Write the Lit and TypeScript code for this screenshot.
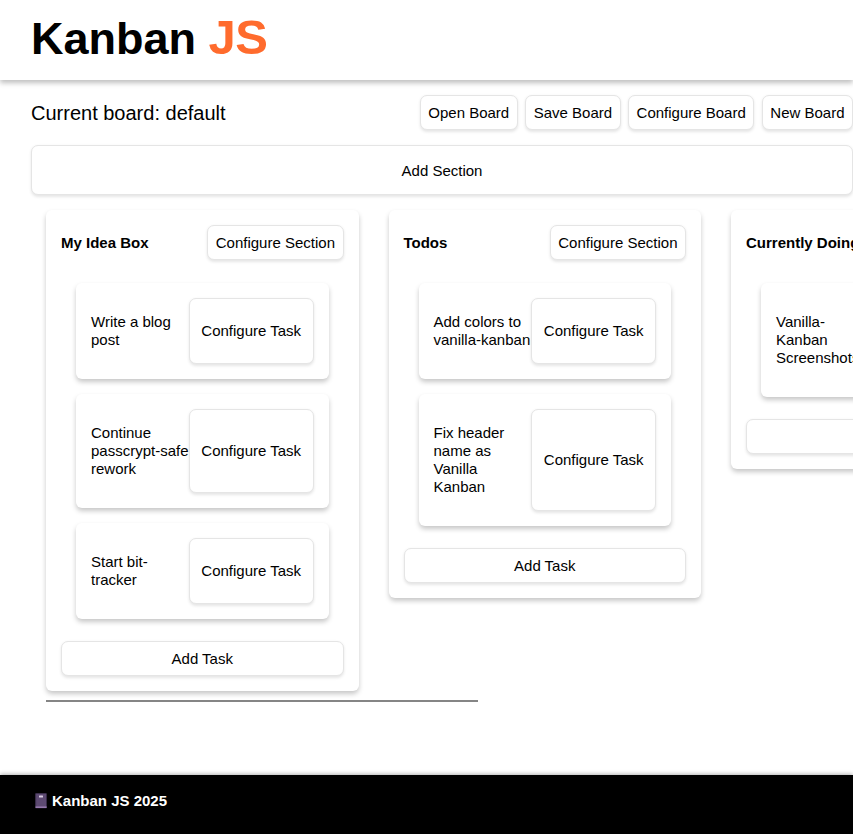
import { LitElement, html, css, svg } from "lit";
import { customElement, property } from "lit/decorators.js";

interface Section {
  name: string;
  tasks: string[];
}

const buttonStyles = css`
  .btn {
    box-sizing: border-box;
    margin: 0;
    height: 35px;
    padding: 0 7.5px;
    border: 1px solid #e5e5e5;
    border-radius: 7px;
    background: #fff;
    color: #000;
    font: 15px/18px "Liberation Sans", Arial, sans-serif;
    white-space: nowrap;
    box-shadow: 0 1.5px 3px rgba(0, 0, 0, 0.1);
  }
`;

const notebook = svg`<svg class="book" viewBox="0 0 13 16" width="13" height="16">
  <rect x="0.2" y="0.2" width="11.6" height="15" rx="0.6" fill="#46375a"/>
  <rect x="1.2" y="0.8" width="9.8" height="12.4" fill="#5d4a72"/>
  <rect x="0.6" y="13.4" width="11" height="1.5" fill="#9d80b5"/>
  <rect x="4" y="2.6" width="4" height="2" rx="0.5" fill="#d9cce2"/>
</svg>`;

@customElement("task-card")
export class TaskCard extends LitElement {
  @property() label = "";

  static styles = [
    buttonStyles,
    css`
      :host {
        display: flex;
        padding: 15px;
        border-radius: 6px;
        background: #fff;
        box-shadow: 0 3px 5px rgba(0, 0, 0, 0.22);
      }
      .label {
        flex: 1 1 0;
        min-width: 0;
        margin: 15px 0;
        line-height: 18px;
      }
      .configure {
        flex: none;
        width: 124.6px;
        height: auto;
      }
    `,
  ];

  render() {
    return html`<p class="label">${this.label}</p>
      <button class="btn configure">Configure Task</button>`;
  }
}

@customElement("board-section")
export class BoardSection extends LitElement {
  @property({ attribute: false }) section: Section = { name: "", tasks: [] };

  static styles = [
    buttonStyles,
    css`
      :host {
        box-sizing: border-box;
        display: flex;
        flex: none;
        flex-direction: column;
        width: 312.5px;
        padding: 15px;
        border-radius: 6px;
        background: #fff;
        box-shadow: 0 3px 5px rgba(0, 0, 0, 0.22);
      }
      .head {
        display: flex;
        align-items: center;
        justify-content: space-between;
      }
      .name {
        margin: 0;
        font-size: 15px;
        line-height: 18px;
        white-space: nowrap;
      }
      .tasks {
        display: flex;
        flex-direction: column;
        gap: 15px;
        margin: 23px 15px 22px;
      }
    `,
  ];

  render() {
    return html`<div class="head">
        <h2 class="name">${this.section.name}</h2>
        <button class="btn">Configure Section</button>
      </div>
      <div class="tasks">
        ${this.section.tasks.map((t) => html`<task-card .label=${t}></task-card>`)}
      </div>
      <button class="btn">Add Task</button>`;
  }
}

@customElement("app-root")
export class AppRoot extends LitElement {
  private sections: Section[] = [
    {
      name: "My Idea Box",
      tasks: ["Write a blog post", "Continue passcrypt-safe rework", "Start bit-tracker"],
    },
    {
      name: "Todos",
      tasks: ["Add colors to vanilla-kanban", "Fix header name as Vanilla Kanban"],
    },
    { name: "Currently Doing", tasks: ["Vanilla-Kanban Screenshots"] },
  ];

  static styles = [
    buttonStyles,
    css`
      :host {
        display: flex;
        flex-direction: column;
        height: 834px;
        overflow: hidden;
        background: #fff;
        color: #000;
        font: 15px/18px "Liberation Sans", Arial, sans-serif;
      }
      .header {
        box-sizing: border-box;
        flex: none;
        height: 80px;
        padding: 7px 31px 0;
        box-shadow: 0 3px 5px rgba(0, 0, 0, 0.25);
      }
      .title {
        margin: 0;
        font-size: 45px;
        line-height: 60px;
      }
      .accent {
        color: #ff6b2d;
        font-size: 49px;
        letter-spacing: -0.5px;
      }
      .main {
        flex: 1;
        min-height: 0;
        padding: 15px 0 0 31px;
      }
      .toolbar {
        display: flex;
        align-items: center;
        justify-content: space-between;
      }
      .current {
        font-size: 20px;
        line-height: 24px;
      }
      .actions {
        display: flex;
        gap: 7.5px;
      }
      .add-section {
        display: block;
        width: 100%;
        height: 50px;
        margin-top: 15px;
        padding-top: 2px;
      }
      .board {
        display: flex;
        align-items: flex-start;
        gap: 30px;
        height: 490px;
        padding: 15px 15px 0;
        overflow: hidden;
      }
      .scrollbar {
        width: 432px;
        height: 2px;
        margin-left: 15px;
        background: #858585;
      }
      .footer {
        display: flex;
        box-sizing: border-box;
        flex: none;
        height: 59px;
        padding: 17px 34px;
        background: #000;
        color: #fff;
        font-weight: bold;
        box-shadow: 0 -1px 4px rgba(0, 0, 0, 0.3);
      }
      .book {
        margin: 1px 4px 0 1px;
      }
    `,
  ];

  render() {
    return html`<header class="header">
        <h1 class="title">Kanban <span class="accent">JS</span></h1>
      </header>
      <main class="main">
        <div class="toolbar">
          <span class="current">Current board: default</span>
          <div class="actions">
            ${["Open Board", "Save Board", "Configure Board", "New Board"].map(
              (l) => html`<button class="btn">${l}</button>`
            )}
          </div>
        </div>
        <button class="btn add-section">Add Section</button>
        <div class="board">
          ${this.sections.map((s) => html`<board-section .section=${s}></board-section>`)}
        </div>
        <div class="scrollbar"></div>
      </main>
      <footer class="footer">${notebook}<span>Kanban JS 2025</span></footer>`;
  }
}
